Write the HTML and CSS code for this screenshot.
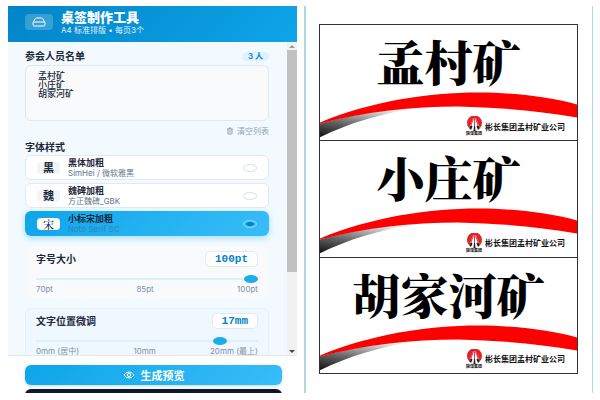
FILE: index.html
```html
<!DOCTYPE html>
<html lang="zh-CN">

<head>
    <meta charset="UTF-8">
    <meta name="viewport" content="width=device-width, initial-scale=1.0">
    <title>桌签制作工具</title>
    <link rel="stylesheet" href="styles.css">
</head>

<body>

    <!-- 共用图形 -->
    <svg class="defs" aria-hidden="true">
        <defs>
            <linearGradient id="shade" x1="0" y1="1" x2="0.6" y2="0">
                <stop offset="0" stop-color="#111"/>
                <stop offset="0.45" stop-color="#666"/>
                <stop offset="1" stop-color="#eee"/>
            </linearGradient>
            <symbol id="swoosh" viewBox="0 0 260 116" preserveAspectRatio="none">
                <path d="M0 99C30 91 62 85 100 83C62 89 28 99 0 113Z" fill="url(#shade)"/>
                <path d="M0 98C52 77 108 68 160 68C200 68 235 73 260 80V93C220 86 180 83 140 82C92 82 48 87 0 99Z" fill="#fe0000"/>
            </symbol>
            <symbol id="logo" viewBox="0 0 30 30">
                <path d="M4 24A15 15 0 1 1 26 24L22 18H8Z" fill="#e3222b"/>
                <path d="M12 5L4 26H26L18 5Z" fill="#fff"/>
                <path d="M13 5L8 18M15 5V20M17 5L22 18" stroke="#e3222b" stroke-width="1.8"/>
                <path d="M8 18L11 21L8 28L4 24ZM22 18L19 21L22 28L26 24ZM14 20H16L17 30H13Z" fill="#222"/>
            </symbol>
        </defs>
    </svg>

    <div class="app">
        <form class="panel">
            <header class="header">
                <span class="header-icon">
                    <svg viewBox="0 0 14 10"><path d="M1 5.5L3.2 1.8Q3.5 1 4.5 1H9.5Q10.5 1 10.8 1.8L13 5.5V7.5Q13 9 11.5 9H2.5Q1 9 1 7.5ZM1.5 5H12.5"/></svg>
                </span>
                <div>
                    <h1>桌签制作工具</h1>
                    <p>A4 标准排版 • 每页3个</p>
                </div>
            </header>

            <div class="middle">
                <div class="content">
                    <!-- 名单 -->
                    <div class="row">
                        <label class="title" for="names">参会人员名单</label>
                        <span class="count">3 人</span>
                    </div>
                    <textarea id="names" spellcheck="false">孟村矿
小庄矿
胡家河矿</textarea>
                    <button type="button" class="clear">
                        <svg viewBox="0 0 8 8"><path d="M1 2H7M3 2V1H5V2M2 2V7H6V2M4 3V6"/></svg>
                        清空列表
                    </button>

                    <!-- 字体 -->
                    <h2 class="title">字体样式</h2>
                    <div class="fonts">
                        <label class="font">
                            <span class="sample">黑</span>
                            <span class="font-text"><b>黑体加粗</b><small>SimHei / 微软雅黑</small></span>
                            <input type="radio" name="font">
                        </label>
                        <label class="font">
                            <span class="sample">魏</span>
                            <span class="font-text"><b>魏碑加粗</b><small>方正魏碑_GBK</small></span>
                            <input type="radio" name="font">
                        </label>
                        <label class="font active">
                            <span class="sample serif">宋</span>
                            <span class="font-text"><b>小标宋加粗</b><small>Noto Serif SC</small></span>
                            <input type="radio" name="font" checked>
                        </label>
                    </div>

                    <!-- 字号 -->
                    <div class="setting">
                        <div class="row">
                            <label class="title" for="size">字号大小</label>
                            <output class="value" for="size">100pt</output>
                        </div>
                        <input type="range" id="size" min="70" max="100" value="100">
                        <div class="ticks"><span>70pt</span><span>85pt</span><span>100pt</span></div>
                    </div>

                    <!-- 位置 -->
                    <div class="setting blue">
                        <div class="row">
                            <label class="title" for="offset">文字位置微调</label>
                            <output class="value" for="offset">17mm</output>
                        </div>
                        <input type="range" id="offset" min="0" max="20" value="17">
                        <div class="ticks"><span>0mm (居中)</span><span>10mm</span><span>20mm (最上)</span></div>
                    </div>
                </div>
                <div class="scrollbar" aria-hidden="true">
                    <i class="arrow up"></i>
                    <i class="thumb"></i>
                    <i class="arrow down"></i>
                </div>
            </div>

            <footer class="footer">
                <button type="button" class="preview-button">
                    <svg viewBox="0 0 12 8"><path d="M1 4Q3 1 6 1T11 4Q9 7 6 7T1 4Z"/><circle cx="6" cy="4" r="1.6"/></svg>
                    生成预览
                </button>
                <button type="button" class="print-button" aria-label="打印"></button>
            </footer>
        </form>

        <main class="preview">
            <section class="card">
                <svg class="swoosh"><use href="#swoosh"/></svg>
                <h3>孟村矿</h3>
                <div class="brand">
                    <span class="mark"><svg><use href="#logo"/></svg><small>陕煤集团</small></span>
                    <span>彬长集团孟村矿业公司</span>
                </div>
            </section>
            <section class="card">
                <svg class="swoosh"><use href="#swoosh"/></svg>
                <h3>小庄矿</h3>
                <div class="brand">
                    <span class="mark"><svg><use href="#logo"/></svg><small>陕煤集团</small></span>
                    <span>彬长集团孟村矿业公司</span>
                </div>
            </section>
            <section class="card">
                <svg class="swoosh"><use href="#swoosh"/></svg>
                <h3>胡家河矿</h3>
                <div class="brand">
                    <span class="mark"><svg><use href="#logo"/></svg><small>陕煤集团</small></span>
                    <span>彬长集团孟村矿业公司</span>
                </div>
            </section>
        </main>
    </div>

</body>

</html>
```

FILE: styles.css
```css
* {
    margin: 0;
    padding: 0;
    box-sizing: border-box;
}

body {
    background: #fff;
    color: #1e293b;
    font-family: Inter, "Noto Sans CJK SC", sans-serif;
    font-size: 8px;
}

button, textarea, input {
    font: inherit;
    color: inherit;
    border: none;
}

svg {
    fill: none;
    stroke-linejoin: round;
}

.defs {
    position: absolute;
    width: 0;
    height: 0;
}

.app {
    display: grid;
    grid-template-columns: minmax(0, 1fr) minmax(0, 1fr);
    gap: 7px;
    height: 100vh;
    padding: 6px 7px 7px 8px;
}

/* 左侧面板 */
.panel {
    min-height: 0;
    display: flex;
    flex-direction: column;
    overflow: hidden;
}

.header {
    display: flex;
    align-items: flex-start;
    gap: 8px;
    height: 36px;
    flex: none;
    padding: 5px 17px;
    background: linear-gradient(135deg, #0284c7, #0ea5e9);
    color: #fff;
}

.header-icon {
    display: grid;
    place-items: center;
    width: 28px;
    height: 16px;
    margin-top: 3px;
    border-radius: 4px;
    background: rgba(255, 255, 255, 0.2);
}

.header-icon svg {
    width: 14px;
    height: 10px;
    stroke: #fff;
}

h1 {
    font-size: 13px;
    line-height: 13px;
    font-weight: 900;
}

.header p {
    line-height: 12px;
    color: #e0f2fe;
}

.middle {
    flex: 1;
    min-height: 0;
    display: flex;
    background: #f2faff;
}

.content {
    flex: 1;
    overflow: hidden;
    padding: 8px 18px 0 17px;
}

.row {
    display: flex;
    justify-content: space-between;
    align-items: center;
}

.title {
    font-size: 10px;
    line-height: 12px;
    font-weight: 600;
}

.count {
    padding: 0 6px;
    line-height: 9px;
    border-radius: 5px;
    background: #e0f2fe;
    color: #0284c7;
    font-weight: 600;
}

textarea {
    display: block;
    width: 100%;
    height: 56px;
    margin-top: 3px;
    padding: 5px 12px;
    border: 1px solid #e2e8f0;
    border-radius: 6px;
    background: #f8fafc;
    font-size: 9px;
    line-height: 9px;
    font-weight: 500;
    resize: none;
    outline: none;
    overflow: hidden;
}

.clear {
    display: flex;
    align-items: center;
    gap: 3px;
    margin: 5px 0 5px auto;
    background: none;
    line-height: 10px;
    color: #94a3b8;
}

.clear svg {
    width: 8px;
    height: 8px;
    stroke: #94a3b8;
}

/* 字体选项 */
.fonts {
    display: flex;
    flex-direction: column;
    gap: 3px;
    margin-top: 2px;
}

.font {
    display: flex;
    align-items: center;
    gap: 8px;
    height: 25px;
    padding: 0 11px;
    border: 1px solid #e2e8f0;
    border-radius: 6px;
    background: #fff;
}

.sample {
    width: 23px;
    border-radius: 4px;
    background: #f1f5f9;
    text-align: center;
    font-size: 11px;
    line-height: 12px;
    font-weight: 700;
}

.serif {
    font-family: "Noto Serif CJK SC", "Noto Sans CJK SC", serif;
}

.font-text {
    flex: 1;
}

.font-text b,
.font-text small {
    display: block;
    font-size: 9px;
    line-height: 10px;
}

.font-text small {
    font-size: 8px;
    color: #64748b;
}

.font input {
    appearance: none;
    width: 14px;
    height: 8px;
    border: 1px solid #dbe2ea;
    border-radius: 50%;
}

.active {
    border-color: transparent;
    background: linear-gradient(135deg, #0ea5e9, #38bdf8) border-box;
    box-shadow: 0 2px 6px rgba(14, 165, 233, 0.35);
}

.active .sample {
    background: #fff;
    font-weight: 500;
}

.font.active small {
    color: #3484b4;
}

.active input {
    border-color: #8bd6fb;
    background: radial-gradient(closest-side, #0284c7 60%, #38bdf8 70%);
}

/* 滑块设置 */
.setting {
    height: 52px;
    margin-top: 10px;
    padding: 4px 10px;
    border: 1px solid #f8fafc;
    border-radius: 6px;
    background: #f8fafc;
}

.blue {
    border-color: #e0f2fe;
    background: #f0f8ff;
}

.value {
    padding: 0 9px;
    border: 1px solid #e0ebf5;
    border-radius: 5px;
    background: #fff;
    color: #0284c7;
    font-family: "Liberation Mono", monospace;
    font-size: 11px;
    line-height: 14px;
    font-weight: 700;
}

input[type="range"] {
    appearance: none;
    display: block;
    width: 100%;
    height: 8px;
    margin: 8px 0 2px;
    background: linear-gradient(#dbeffe, #dbeffe) center / 100% 2px no-repeat;
}

input[type="range"]::-webkit-slider-thumb {
    appearance: none;
    width: 14px;
    height: 8px;
    border-radius: 50%;
    background: #1cabec;
}

.ticks {
    display: flex;
    justify-content: space-between;
    line-height: 9px;
    color: #8290a5;
}

.scrollbar {
    display: flex;
    flex-direction: column;
    align-items: center;
    width: 10px;
    background: #f1f1f1;
}

.arrow {
    height: 8px;
    flex: none;
}

.arrow::before {
    content: "";
    display: block;
    margin-top: 3px;
    border: 3px solid transparent;
}

.up::before {
    border-top: 0;
    border-bottom-color: #999;
}

.down::before {
    border-bottom: 0;
    border-top-color: #444;
}

.thumb {
    width: 100%;
    height: 71%;
    background: #c1c1c1;
}

.down {
    margin-top: auto;
}

/* 底部按钮 */
.footer {
    flex: none;
    height: 38px;
    padding: 9px 15px 0 17px;
    border-top: 1px solid #e2e8f0;
    overflow: hidden;
}

.preview-button,
.print-button {
    display: flex;
    justify-content: center;
    align-items: center;
    gap: 6px;
    width: 100%;
    height: 20px;
    border-radius: 6px;
    background: linear-gradient(135deg, #0ea5e9, #38bdf8);
    box-shadow: 0 1px 3px rgba(2, 132, 199, 0.3);
    color: #fff;
    font-size: 11px;
    font-weight: 700;
}

.preview-button svg {
    width: 12px;
    height: 8px;
    stroke: #fff;
}

.print-button {
    margin-top: 4px;
    background: #0f172a;
}

/* 右侧预览 */
.preview {
    display: flex;
    flex-direction: column;
    padding: 18px 14px 19px 13px;
    border: solid #add8e6;
    border-width: 0 1px 0 2px;
}

.card {
    position: relative;
    flex: 1;
    display: flex;
    flex-direction: column;
    justify-content: space-between;
    border: 1px solid #333;
    background: #fff;
}

.card + .card {
    border-top: none;
}

.swoosh {
    position: absolute;
    inset: 0;
    width: 100%;
    height: 100%;
}

.card h3 {
    position: relative;
    margin-top: 6px;
    text-align: center;
    color: #000;
    font-family: "Noto Serif CJK SC", "Noto Sans CJK SC", serif;
    font-size: 48px;
    line-height: 60px;
    font-weight: 900;
}

.brand {
    position: relative;
    display: flex;
    justify-content: flex-end;
    align-items: center;
    gap: 3px;
    padding: 0 12px 4px 0;
    color: #111;
    font-weight: 700;
}

.mark {
    display: flex;
    flex-direction: column;
    align-items: center;
    width: 16px;
}

.mark svg {
    width: 15px;
    height: 15px;
}

.mark small {
    font-size: 4px;
    line-height: 5px;
}
```
